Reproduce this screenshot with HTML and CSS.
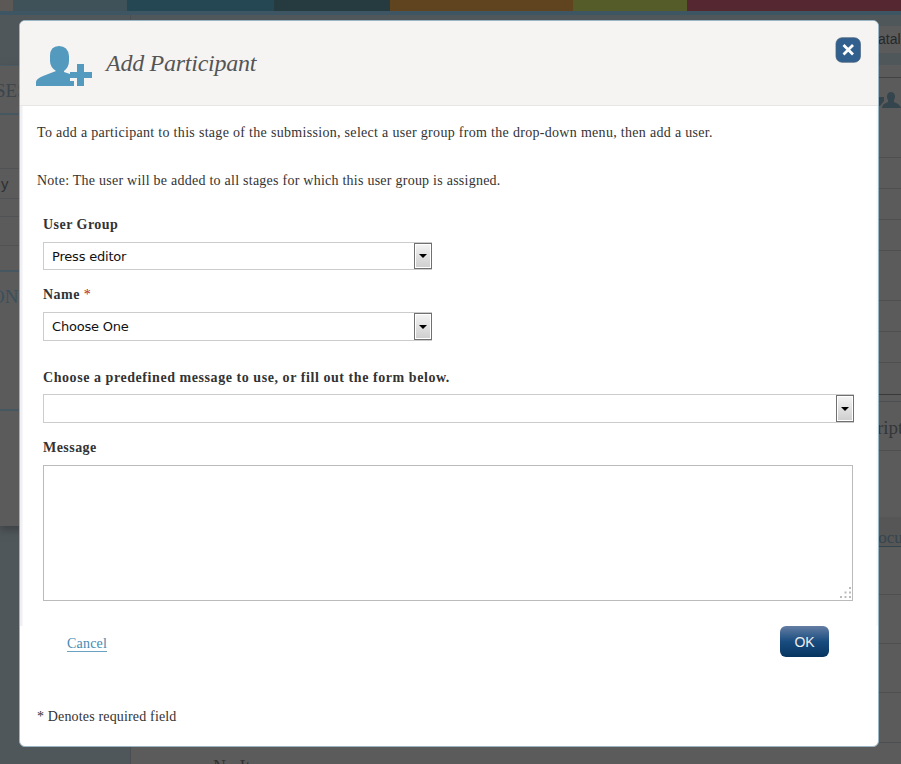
FILE: index.html
```html
<!DOCTYPE html>
<html lang="en">
<head>
<meta charset="utf-8">
<title>Add Participant</title>
<link rel="stylesheet" href="styles.css">
</head>
<body>
<div class="page">
  <div class="strip"><i class="s1"></i><i class="s2"></i><i class="s3"></i><i class="s4"></i><i class="s5"></i><i class="s6"></i><i class="s7"></i></div>
  <div class="under"></div>
  <div class="columns">
    <div class="side">
      <div class="side-panel">
        <div class="row blue h49">SES</div>
        <div class="row h54"></div>
        <div class="row h30 sans">y</div>
        <div class="row h18"></div>
        <div class="row h29"></div>
        <div class="row blue h25"></div>
        <div class="row blue h138 title2">ON</div>
        <div class="row h117"></div>
      </div>
    </div>
    <div class="main">
      <div class="tab">atal</div>
      <div class="tabfoot"></div>
      <div class="mrow m12"></div>
      <div class="mrow m80 icons">
        <svg width="23" height="16" viewBox="0 0 23 16"><path d="M0 5h6v4l-4 5H0z"/><path d="M4 16q0-4 6-6V8C8 5 9 0 13 0s5 5 3 8v2q6 2 7 6z"/></svg>
      </div>
      <div class="mrow m31"></div><div class="mrow m31"></div><div class="mrow m31"></div>
      <div class="mrow m50"></div><div class="mrow m31"></div><div class="mrow m31"></div>
      <div class="mrow m32 dark"></div><div class="mrow m7"></div>
      <div class="mrow m49 script">ript</div>
      <div class="mrow m66 plain"></div>
      <div class="mrow m30 doc">Docu</div>
      <div class="mrow m48"></div><div class="mrow m49"></div><div class="mrow m49"></div><div class="mrow m50"></div>
      <div class="none">No Items</div>
    </div>
  </div>
</div>

<div class="modal" role="dialog">
  <header class="head">
    <svg class="person" width="56" height="41" viewBox="0 0 56 41"><path d="M14 10Q14 0 23 0T33 10V15Q33 21 28 25V26L34 28V35H38V40H0V36Q0 33 7 30L20 25Q14 21 14 15Z"/><path d="M41 18h7v8h8v6h-8v8h-7v-8h-7v-6h7z"/></svg>
    <h1><span>Add Participant</span></h1>
    <svg class="close" width="26" height="26" viewBox="0 0 26 26"><rect x="1" y=".8" width="24.400" height="24.400" rx="6"/><path d="M8.500 8l9.500 9.500M18 8L8.500 17.500"/></svg>
  </header>
  <div class="body">
    <p class="p1"><span>To add a participant to this stage of the submission, select a user group from the drop-down menu, then add a user.</span></p>
    <p class="p2"><span>Note: The user will be added to all stages for which this user group is assigned.</span></p>
    <div class="form">
      <label class="l1">User Group</label>
      <div class="select"><span class="v1">Press editor</span><b class="arrow"></b></div>
      <label class="l2">Name <em>*</em></label>
      <div class="select tall"><span class="v2">Choose One</span><b class="arrow"></b></div>
      <label class="l3">Choose a predefined message to use, or fill out the form below.</label>
      <div class="select tall wide"><span></span><b class="arrow"></b></div>
      <label class="l4">Message</label>
      <div class="area"><svg width="13" height="13" viewBox="0 0 13 13"><path d="M10 0h2v2h-2zM5.500 4.500h2v2h-2zM10 4.500h2v2h-2zM1 9h2v2H1zM5.500 9h2v2h-2zM10 9h2v2h-2z"/></svg></div>
      <div class="actions"><a class="cancel">Cancel</a><button>OK</button></div>
    </div>
    <p class="required">* Denotes required field</p>
  </div>
</div>
</body>
</html>
```
FILE: styles.css
```css
* { box-sizing: border-box; }
body { margin: 0; width: 901px; height: 764px; overflow: hidden; background: #50575b; font-family: "Liberation Serif", serif; color: #333; }
.page { height: 764px; display: flex; flex-direction: column; overflow: hidden; }
.strip { display: flex; height: 11px; flex: none; }
.strip i { height: 11px; }
.s1 { width: 13px; background: #5b5855; }
.s2 { width: 114px; background: #3f5159; }
.s3 { width: 147px; background: #254653; }
.s4 { width: 116px; background: #263b40; }
.s5 { width: 183px; background: #60431f; }
.s6 { width: 114px; background: #555c2a; }
.s7 { flex: 1; background: #552831; }
.under { height: 4px; flex: none; background: #3e5563; }
.columns { display: flex; flex: 1; min-height: 0; }
.side { width: 130px; flex: none; padding-top: 50px; }
.side-panel { background: #5b5b5b; box-shadow: 0 4px 8px #3c4145; width: 120px; border-top: 1px solid #4a5a63; }
.row { border-bottom: 1px solid #505254; overflow: hidden; white-space: nowrap; font-size: 19px; color: #3c454c; }
.row.blue { border-bottom: 2px solid #465762; }
.h49 { height: 49px; line-height: 49px; text-indent: -5px; }
.h54 { height: 54px; }
.h30 { height: 30px; }
.row.sans { font: 15px/29px "Liberation Sans", sans-serif; text-indent: 1px; color: #303030; }
.h18 { height: 18px; }
.h29 { height: 29px; }
.h25 { height: 26px; }
.h138 { height: 139px; line-height: 50px; }
.title2 { text-indent: -9px; color: #3c4f5b; }
.h117 { height: 115px; border: 0; }
.main { flex: 1; min-width: 0; padding-top: 11px; background: linear-gradient(#50575b 50px, #5b5b5b 50px); border-left: 1px solid #4a4e50; display: flex; flex-direction: column; }
.tab { height: 27px; flex: none; background: #5b5b5b; padding-left: 747px; font: 14px/27px "Liberation Sans", sans-serif; color: #25282a; }
.tabfoot { height: 12px; flex: none; background: #50575b; }
.mrow { flex: none; border-bottom: 1px solid #4d4f50; padding-left: 747px; overflow: hidden; white-space: nowrap; }
.m12 { height: 13px; border-color: #414344; }
.m80 { height: 80px; }
.m31 { height: 31px; }
.m32 { height: 32px; }
.m50 { height: 50px; }
.m7 { height: 7px; }
.m49 { height: 49px; }
.m66 { height: 66px; }
.m30 { height: 30px; }
.m48 { height: 48px; }
.dark { border-color: #38393a; }
.plain { border: 0; }
.icons svg { display: block; margin: 14px 0 0; fill: #34454e; }
.script { font-size: 19px; line-height: 51px; color: #333639; text-indent: -1px; }
.doc { background: #565656; border-color: #34444d; font-size: 17px; line-height: 42px; color: #35454e; text-indent: -12px; }
.none { padding: 14px 0 0 82px; font-size: 18px; line-height: 20px; color: #333; }

.modal { position: absolute; left: 19px; top: 20px; width: 860px; height: 727px; background: #fff; border: 1px solid #9ab5c4; border-radius: 6px; overflow: hidden; }
.head { height: 85px; background: #f5f4f2; border-bottom: 1px solid #e7e6e4; display: flex; align-items: flex-start; }
.person { margin: 25px 0 0 16px; fill: #5499be; }
h1 { margin: 26px 0 0 14px; font: italic 24px/32px "Liberation Serif", serif; color: #555; flex: 1; white-space: nowrap; letter-spacing: -.26px; }
.close { margin: 16px 17px 0 0; }
.close rect { fill: #315f8e; stroke: #46627c; stroke-width: .8; }
.close path { stroke: #fff; stroke-width: 2.800; fill: none; }
.body { padding: 0 17px; background: linear-gradient(90deg, #f0f0f4 2px, #fff 3px, #fff 856px, #f7f7f8 857px) 0 0 / 100% 520px no-repeat; height: 641px; }
p { margin: 0; white-space: nowrap; font-size: 14px; line-height: 20px; }
.p1 { padding-top: 17px; letter-spacing: .307px; }
.p2 { padding-top: 28px; letter-spacing: .245px; }
.form { margin-left: 6px; width: 811px; }
label { display: block; font-size: 14px; font-weight: bold; line-height: 20px; white-space: nowrap; letter-spacing: .46px; }
.l1 { margin: 24px 0 7px; }
.l2 { margin: 15px 0 7px; }
.l3 { margin: 27px 0 6px; letter-spacing: .56px; }
.l4 { margin: 15px 0 7px; }
label em { font-style: normal; font-weight: normal; color: #b02020; }
.select { width: 389px; height: 28px; border: 1px solid #ccc; display: flex; justify-content: space-between; align-items: stretch; font: 13px/27px "DejaVu Sans", sans-serif; color: #111; padding-left: 8px; }
.select.tall { height: 29px; line-height: 27px; }
.select.wide { width: 811px; }
.arrow { width: 18px; margin-right: -1px; border: 1px solid #707070; box-shadow: inset 0 0 0 1px #fff; background: linear-gradient(#f4f4f4, #cecece); display: flex; align-items: center; justify-content: center; }
.arrow::before { content: ""; border: 4px solid transparent; border-top-color: #000; border-bottom: 0; }
.v1, .v2 { letter-spacing: -.2px; }
.area { width: 810px; height: 136px; border: 1px solid #bbb; display: flex; align-items: flex-end; justify-content: flex-end; }
.area svg { fill: #bbb; }
.actions { display: flex; justify-content: space-between; align-items: flex-start; padding: 25px 25px 0 24px; height: 81px; }
.cancel { font-size: 14px; line-height: 17px; margin-top: 9px; color: #468ab3; border-bottom: 1px solid #6aa0c0; height: 17px; letter-spacing: .2px; }
button { width: 49px; height: 31px; border: 0; border-radius: 6px; background: linear-gradient(#647da3, #194d80 50%, #06345f); color: #eee; font: 14px/30px "Liberation Sans", sans-serif; padding: 0; }
.required { margin-top: 25px; letter-spacing: .16px; }
```
